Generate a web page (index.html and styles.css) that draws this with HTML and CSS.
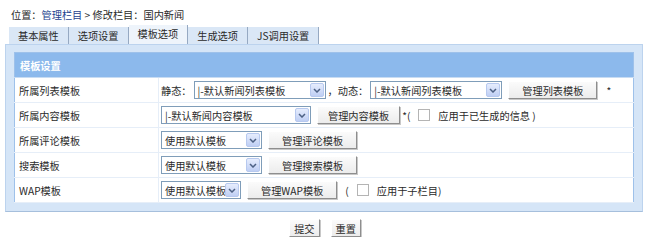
FILE: index.html
```html
<!DOCTYPE html>
<html lang="zh-CN">
<head>
    <meta charset="UTF-8">
    <title>修改栏目</title>
    <link rel="stylesheet" href="styles.css">
</head>
<body>
    <div class="crumb">
        位置：<a href="#">管理栏目</a> &gt; 修改栏目：国内新闻
    </div>

    <ul class="tabs">
        <li>基本属性</li>
        <li>选项设置</li>
        <li class="active">模板选项</li>
        <li>生成选项</li>
        <li>JS调用设置</li>
    </ul>

    <div class="panel">
        <table class="form">
            <tr>
                <th colspan="2">模板设置</th>
            </tr>
            <tr>
                <td class="label">所属列表模板</td>
                <td class="value">
                    <div class="line">
                        <span>静态：</span>
                        <span class="sel w132">|-默认新闻列表模板<i class="arrow"><svg width="8" height="5" viewBox="0 0 8 5"><path d="M1 1l3 3 3-3" fill="none" stroke="#4d6185" stroke-width="1.5"/></svg></i></span>
                        <span>，动态：</span>
                        <span class="sel w132">|-默认新闻列表模板<i class="arrow"><svg width="8" height="5" viewBox="0 0 8 5"><path d="M1 1l3 3 3-3" fill="none" stroke="#4d6185" stroke-width="1.5"/></svg></i></span>
                        <button class="btn">管理列表模板</button>
                        <span class="star">*</span>
                    </div>
                </td>
            </tr>
            <tr>
                <td class="label">所属内容模板</td>
                <td class="value">
                    <div class="line">
                        <span class="sel w150">|-默认新闻内容模板<i class="arrow"><svg width="8" height="5" viewBox="0 0 8 5"><path d="M1 1l3 3 3-3" fill="none" stroke="#4d6185" stroke-width="1.5"/></svg></i></span>
                        <button class="btn tight">管理内容模板</button>
                        <span>*(</span>
                        <span class="check"></span>
                        <span>应用于已生成的信息 )</span>
                    </div>
                </td>
            </tr>
            <tr>
                <td class="label">所属评论模板</td>
                <td class="value">
                    <div class="line">
                        <span class="sel w101">使用默认模板<i class="arrow"><svg width="8" height="5" viewBox="0 0 8 5"><path d="M1 1l3 3 3-3" fill="none" stroke="#4d6185" stroke-width="1.5"/></svg></i></span>
                        <button class="btn">管理评论模板</button>
                    </div>
                </td>
            </tr>
            <tr>
                <td class="label">搜索模板</td>
                <td class="value">
                    <div class="line">
                        <span class="sel w101">使用默认模板<i class="arrow"><svg width="8" height="5" viewBox="0 0 8 5"><path d="M1 1l3 3 3-3" fill="none" stroke="#4d6185" stroke-width="1.5"/></svg></i></span>
                        <button class="btn">管理搜索模板</button>
                    </div>
                </td>
            </tr>
            <tr>
                <td class="label">WAP模板</td>
                <td class="value">
                    <div class="line">
                        <span class="sel w80">使用默认模板<i class="arrow"><svg width="8" height="5" viewBox="0 0 8 5"><path d="M1 1l3 3 3-3" fill="none" stroke="#4d6185" stroke-width="1.5"/></svg></i></span>
                        <button class="btn">管理WAP模板</button>
                        <span class="paren">(</span>
                        <span class="check"></span>
                        <span>应用于子栏目)</span>
                    </div>
                </td>
            </tr>
        </table>
    </div>

    <div class="actions">
        <button class="btn small">提交</button>
        <button class="btn small">重置</button>
    </div>
</body>
</html>
```

FILE: styles.css
```css
* {
    margin: 0;
    padding: 0;
    box-sizing: border-box;
}

body {
    font-family: "Noto Sans CJK SC", "Liberation Sans", sans-serif;
    font-size: 10.2px;
    color: #2a2a2a;
    background: #fff;
    width: 650px;
}

.crumb {
    height: 25px;
    line-height: 14px;
    padding: 8px 0 0 11px;
}

.crumb a {
    color: #1d3f8f;
    text-decoration: none;
}

.tabs {
    list-style: none;
    display: flex;
    align-items: flex-end;
    margin-left: 9px;
    height: 19px;
}

.tabs li {
    height: 17px;
    line-height: 17px;
    padding: 0 9px;
    background: #dae7f6;
    border-right: 1px solid #96a9c2;
}

.tabs li.active {
    height: 19px;
    line-height: 17px;
    background: #eef4fb;
}

.panel {
    margin: 0 7px 0 5px;
    background: #d5e5f7;
    border: 1px solid #bcd3ee;
    border-bottom-color: #a6bfdc;
    padding: 7px 8px 8px 8px;
}

.form {
    width: 100%;
    border-collapse: collapse;
    background: #fff;
    border: 1px solid #9ec1ea;
}

.form th {
    height: 25px;
    text-align: left;
    padding-left: 5px;
    color: #fff;
    font-weight: bold;
    background: #8cb9ec;
    border-bottom: 1px solid #c8dcf3;
}

.form td {
    height: 25px;
    border-bottom: 1px solid #e6eef8;
}

.form td.label {
    width: 144px;
    padding-left: 4px;
    border-right: 1px solid #e6eef8;
}

.form td.value {
    padding-left: 2px;
}

.line {
    display: flex;
    align-items: center;
    gap: 2px;
    white-space: nowrap;
}

.sel {
    position: relative;
    display: flex;
    align-items: center;
    height: 18px;
    padding-left: 3px;
    overflow: hidden;
    border: 1px solid #7f9db9;
    background: #fff;
}

.w132 { width: 132px; }
.w150 { width: 150px; }
.w101 { width: 101px; }
.w80 { width: 80px; }

.arrow {
    position: absolute;
    right: 1px;
    top: 1px;
    width: 14px;
    height: 14px;
    display: flex;
    align-items: center;
    justify-content: center;
    border: 1px solid #b7c9ef;
    border-radius: 2px;
    background: linear-gradient(#e6edfd, #bfcff4);
}

.btn {
    font-family: inherit;
    font-size: 10.2px;
    color: #2a2a2a;
    height: 18px;
    padding: 0 13px;
    margin-left: 4px;
    background: linear-gradient(#fbfbfb, #ececec);
    border: 1px solid #fff;
    border-right-color: #8e8e8e;
    border-bottom-color: #8e8e8e;
    box-shadow: 1px 1px 0 #c8c8c8;
}

.btn.tight {
    padding: 0 10px;
}

.star {
    margin-left: 7px;
}

.paren {
    margin-left: 6px;
}

.check {
    width: 12px;
    height: 12px;
    margin: 0 6px 0 6px;
    border: 1px solid #b4b4b4;
    background: #fff;
}

.actions {
    display: flex;
    justify-content: center;
    gap: 11px;
    padding-top: 7px;
}

.btn.small {
    padding: 0 4px;
    margin: 0;
    height: 18px;
}
```
